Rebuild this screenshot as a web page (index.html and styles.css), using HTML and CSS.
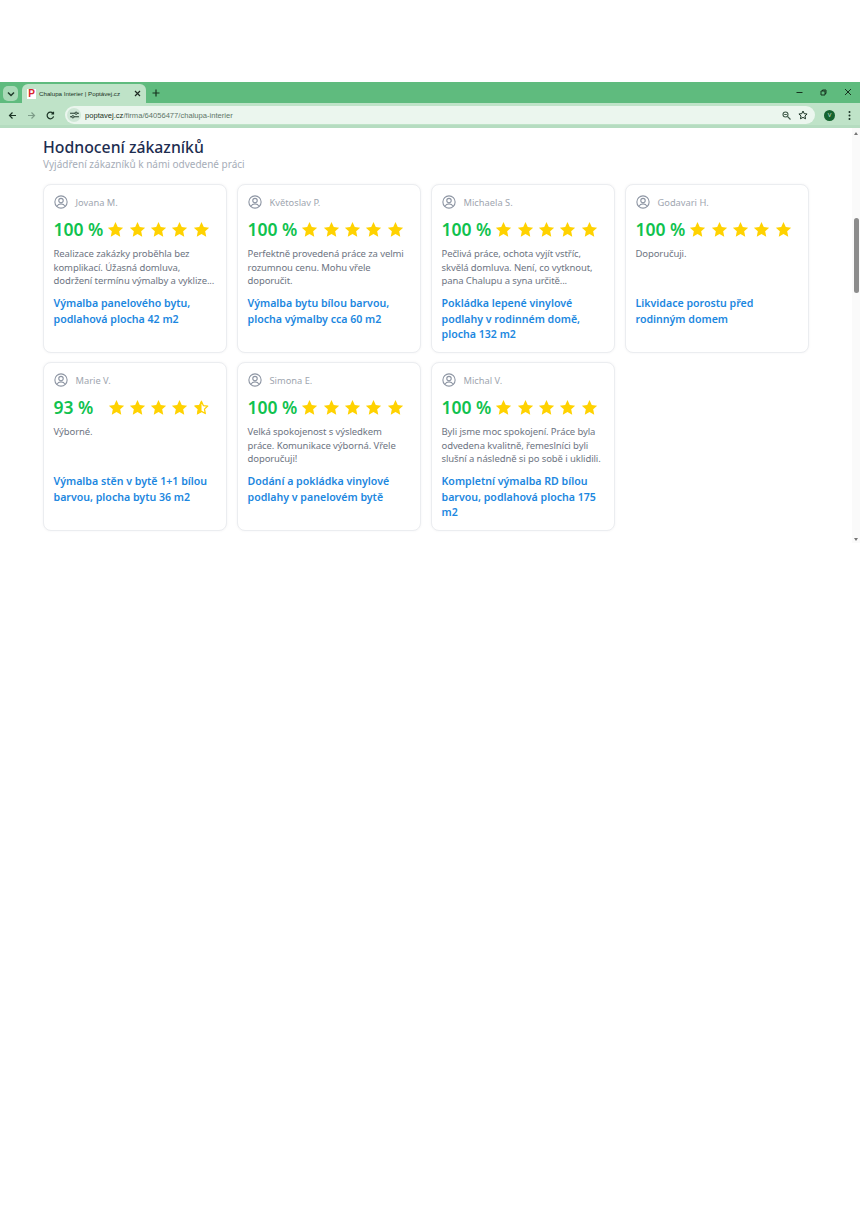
FILE: index.html
```html
<!DOCTYPE html>
<html lang="cs">
<head>
  <meta charset="UTF-8">
  <meta name="viewport" content="width=device-width, initial-scale=1.0">
  <title>Chalupa Interier | Poptávej.cz</title>
  <link rel="stylesheet" href="styles.css">
</head>
<body>
  <svg class="defs" width="0" height="0">
    <defs>
      <symbol id="star" viewBox="0 0 24 24">
        <path fill="#ffd200" d="M12 1.500l3.200 7 7.600.9-5.600 5.200 1.500 7.600L12 18.400l-6.700 3.800 1.500-7.600L1.200 9.400l7.600-.9z"/>
      </symbol>
      <symbol id="star-half" viewBox="0 0 24 24">
        <path fill="none" stroke="#ffd200" stroke-width="1.800" stroke-linejoin="round" d="M12 3.500l2.600 5.800 6.200.7-4.600 4.300 1.200 6.200-5.400-3.100-5.400 3.100 1.200-6.200L3.200 10l6.200-.7z"/>
        <path fill="#ffd200" d="M12 1.500v16.900l-6.700 3.800 1.500-7.600L1.200 9.400l7.600-.9z"/>
      </symbol>
      <symbol id="user" viewBox="0 0 24 24">
        <g fill="none" stroke="#8d95a3" stroke-width="1.900">
          <circle cx="12" cy="12" r="10.500"/>
          <circle cx="12" cy="9.500" r="3.800"/>
          <path d="M5 19.500c1.500-3 4-4.200 7-4.200s5.500 1.200 7 4.200"/>
        </g>
      </symbol>
    </defs>
  </svg>

  <div class="browser">
    <div class="tabstrip">
      <div class="tab-menu">
        <svg width="8" height="6" viewBox="0 0 8 6"><path d="M1 1.500l3 3 3-3" fill="none" stroke="#1f3a2a" stroke-width="1.500"/></svg>
      </div>
      <div class="tab">
        <span class="favicon">P</span>
        <span class="tab-title">Chalupa Interier | Poptávej.cz</span>
        <svg class="tab-close" width="7" height="7" viewBox="0 0 7 7"><path d="M1 1l5 5M6 1L1 6" stroke="#1f2a24" stroke-width="1.200"/></svg>
      </div>
      <svg class="tab-new" width="8" height="8" viewBox="0 0 8 8"><path d="M4 .5v7M.5 4h7" stroke="#17321f" stroke-width="1.200"/></svg>
      <div class="win-controls">
        <svg width="7" height="7" viewBox="0 0 7 7"><path d="M.5 3.500h6" stroke="#17321f" stroke-width="1"/></svg>
        <svg width="7" height="7" viewBox="0 0 7 7"><path d="M1 2h4v4H1zM2.500 2V1H6v3.500H5" fill="none" stroke="#17321f" stroke-width="1"/></svg>
        <svg width="8" height="8" viewBox="0 0 8 8"><path d="M1 1l6 6M7 1L1 7" stroke="#17321f" stroke-width="1"/></svg>
      </div>
    </div>
    <div class="toolbar">
      <svg class="nav-icon" width="9" height="9" viewBox="0 0 9 9"><path d="M8 4.500H1.500M4.500 1.500l-3 3 3 3" fill="none" stroke="#1b3325" stroke-width="1.200"/></svg>
      <svg class="nav-icon" width="9" height="9" viewBox="0 0 9 9"><path d="M1 4.500h6.500M4.500 1.500l3 3-3 3" fill="none" stroke="#7d9c88" stroke-width="1.200"/></svg>
      <svg class="nav-icon" width="9" height="9" viewBox="0 0 9 9"><path d="M7.600 5.400A3.300 3.300 0 1 1 7 2.400M7.500 .8v2.200H5.300" fill="none" stroke="#1b3325" stroke-width="1.200"/></svg>
      <div class="omnibox">
        <span class="site-info">
          <svg width="9" height="8" viewBox="0 0 10 9"><path d="M0 2.500h5.500M8 2.500h2M0 6.500h2M4.500 6.500H10" stroke="#1b3325" stroke-width="1.100"/><circle cx="6.800" cy="2.500" r="1.300" fill="none" stroke="#1b3325"/><circle cx="3.200" cy="6.500" r="1.300" fill="none" stroke="#1b3325"/></svg>
        </span>
        <span class="url"><b>poptavej.cz</b>/firma/64056477/chalupa-interier</span>
        <svg class="omni-icon" width="9" height="9" viewBox="0 0 9 9"><circle cx="3.500" cy="3.500" r="2.500" fill="none" stroke="#3f5a49" stroke-width="1.100"/><path d="M5.500 5.500l3 3M2.200 3.500h2.600" stroke="#3f5a49" stroke-width="1.100"/></svg>
        <svg class="omni-icon" width="10" height="10" viewBox="0 0 24 24"><path d="M12 2.500l2.900 6.300 6.900.8-5.100 4.700 1.400 6.800-6.100-3.400-6.100 3.400 1.400-6.800-5.100-4.700 6.900-.8z" fill="none" stroke="#1b3325" stroke-width="2.400"/></svg>
      </div>
      <span class="avatar">V</span>
      <svg class="kebab" width="3" height="9" viewBox="0 0 3 9"><circle cx="1.500" cy="1" r="1" fill="#1b3325"/><circle cx="1.500" cy="4.500" r="1" fill="#1b3325"/><circle cx="1.500" cy="8" r="1" fill="#1b3325"/></svg>
    </div>

    <div class="viewport">
      <main class="content">
        <h2>Hodnocení zákazníků</h2>
        <p class="subtitle">Vyjádření zákazníků k námi odvedené práci</p>
        <div class="reviews">

          <div class="card">
            <div class="author"><svg class="user-icon"><use href="#user"/></svg>Jovana M.</div>
            <div class="rating"><span class="score">100 %</span><span class="stars"><svg><use href="#star"/></svg><svg><use href="#star"/></svg><svg><use href="#star"/></svg><svg><use href="#star"/></svg><svg><use href="#star"/></svg></span></div>
            <p class="text">Realizace zakázky proběhla bez komplikací. Úžasná domluva, dodržení termínu výmalby a vyklize...</p>
            <a class="job" href="#">Výmalba panelového bytu, podlahová plocha 42 m2</a>
          </div>

          <div class="card">
            <div class="author"><svg class="user-icon"><use href="#user"/></svg>Květoslav P.</div>
            <div class="rating"><span class="score">100 %</span><span class="stars"><svg><use href="#star"/></svg><svg><use href="#star"/></svg><svg><use href="#star"/></svg><svg><use href="#star"/></svg><svg><use href="#star"/></svg></span></div>
            <p class="text">Perfektně provedená práce za velmi rozumnou cenu. Mohu vřele doporučit.</p>
            <a class="job" href="#">Výmalba bytu bílou barvou, plocha výmalby cca 60 m2</a>
          </div>

          <div class="card">
            <div class="author"><svg class="user-icon"><use href="#user"/></svg>Michaela S.</div>
            <div class="rating"><span class="score">100 %</span><span class="stars"><svg><use href="#star"/></svg><svg><use href="#star"/></svg><svg><use href="#star"/></svg><svg><use href="#star"/></svg><svg><use href="#star"/></svg></span></div>
            <p class="text">Pečlivá práce, ochota vyjít vstříc, skvělá domluva. Není, co vytknout, pana Chalupu a syna určitě...</p>
            <a class="job" href="#">Pokládka lepené vinylové podlahy v rodinném domě, plocha 132 m2</a>
          </div>

          <div class="card">
            <div class="author"><svg class="user-icon"><use href="#user"/></svg>Godavari H.</div>
            <div class="rating"><span class="score">100 %</span><span class="stars"><svg><use href="#star"/></svg><svg><use href="#star"/></svg><svg><use href="#star"/></svg><svg><use href="#star"/></svg><svg><use href="#star"/></svg></span></div>
            <p class="text">Doporučuji.</p>
            <a class="job" href="#">Likvidace porostu před rodinným domem</a>
          </div>

          <div class="card">
            <div class="author"><svg class="user-icon"><use href="#user"/></svg>Marie V.</div>
            <div class="rating"><span class="score wide">93 %</span><span class="stars"><svg><use href="#star"/></svg><svg><use href="#star"/></svg><svg><use href="#star"/></svg><svg><use href="#star"/></svg><svg><use href="#star-half"/></svg></span></div>
            <p class="text">Výborné.</p>
            <a class="job" href="#">Výmalba stěn v bytě 1+1 bílou barvou, plocha bytu 36 m2</a>
          </div>

          <div class="card">
            <div class="author"><svg class="user-icon"><use href="#user"/></svg>Simona E.</div>
            <div class="rating"><span class="score">100 %</span><span class="stars"><svg><use href="#star"/></svg><svg><use href="#star"/></svg><svg><use href="#star"/></svg><svg><use href="#star"/></svg><svg><use href="#star"/></svg></span></div>
            <p class="text">Velká spokojenost s výsledkem práce. Komunikace výborná. Vřele doporučuji!</p>
            <a class="job" href="#">Dodání a pokládka vinylové podlahy v panelovém bytě</a>
          </div>

          <div class="card">
            <div class="author"><svg class="user-icon"><use href="#user"/></svg>Michal V.</div>
            <div class="rating"><span class="score">100 %</span><span class="stars"><svg><use href="#star"/></svg><svg><use href="#star"/></svg><svg><use href="#star"/></svg><svg><use href="#star"/></svg><svg><use href="#star"/></svg></span></div>
            <p class="text">Byli jsme moc spokojení. Práce byla odvedena kvalitně, řemeslníci byli slušní a následně si po sobě i uklidili.</p>
            <a class="job" href="#">Kompletní výmalba RD bílou barvou, podlahová plocha 175 m2</a>
          </div>

        </div>
      </main>
      <div class="scrollbar">
        <span class="arrow-up"></span>
        <span class="thumb"></span>
        <span class="arrow-down"></span>
      </div>
    </div>
  </div>
</body>
</html>
```

FILE: styles.css
```css
body {
  margin: 0;
  padding-top: 82px;
  background: #fff;
  font-family: "Noto Sans", "Open Sans", sans-serif;
  overflow: hidden;
}
.defs {
  position: absolute;
}

/* Horni lista prohlizece */
.tabstrip {
  height: 21px;
  background: #5fbb7e;
  display: flex;
  align-items: flex-end;
  color: #1b3325;
}
.tab-menu {
  width: 15px;
  height: 15px;
  margin: 0 4px 2px 3px;
  background: #a9d9b7;
  border-radius: 5px;
  display: flex;
  align-items: center;
  justify-content: center;
}
.tab {
  width: 124px;
  height: 19px;
  padding: 0 5px;
  box-sizing: border-box;
  background: #bfe3c8;
  border-radius: 6px 6px 0 0;
  display: flex;
  align-items: center;
  font-size: 6.200px;
  font-family: "Liberation Sans", sans-serif;
}
.favicon {
  width: 9px;
  height: 10px;
  margin-right: 3px;
  background: #fff;
  color: #d9232e;
  font-size: 10px;
  font-weight: 700;
  line-height: 10px;
  text-align: center;
}
.tab-title {
  flex: 1;
  white-space: nowrap;
}
.tab-new {
  margin: 0 0 6px 6px;
}
.win-controls {
  margin-left: auto;
  padding-right: 8px;
  margin-bottom: 7px;
  display: flex;
  gap: 17px;
  align-items: center;
}

/* Adresni radek */
.toolbar {
  height: 25px;
  background: #bfe3c8;
  display: flex;
  align-items: center;
  padding-top: 2px;
  box-sizing: border-box;
  border-bottom: 3px solid #b5dcc0;
}
.nav-icon {
  margin-left: 8px;
  margin-right: 2px;
}
.omnibox {
  width: 750px;
  height: 18px;
  margin-left: 8px;
  background: #ebf6ee;
  border-radius: 9px;
  display: flex;
  align-items: center;
  font-size: 7.600px;
  font-family: "Liberation Sans", sans-serif;
  color: #5d7567;
}
.omnibox b {
  font-weight: 400;
  color: #1b3325;
}
.site-info {
  width: 14px;
  height: 14px;
  margin: 0 4px 0 2px;
  background: #cfe7d6;
  border-radius: 50%;
  display: flex;
  align-items: center;
  justify-content: center;
}
.url {
  flex: 1;
}
.omni-icon {
  margin-right: 7px;
}
.avatar {
  width: 11px;
  height: 11px;
  margin-left: 9px;
  background: #14632f;
  border-radius: 50%;
  color: #cfe7d6;
  font-size: 6px;
  line-height: 11px;
  text-align: center;
}
.kebab {
  margin-left: 13px;
}

/* Obsah stranky */
.viewport {
  height: 415px;
  position: relative;
}
.content {
  padding: 9px 0 0 43px;
}
h2 {
  margin: 0;
  font-size: 15.800px;
  line-height: 20px;
  font-weight: 500;
  color: #1d2d50;
}
.subtitle {
  margin: 0;
  font-size: 10px;
  line-height: 14px;
  color: #a6adb8;
}
.reviews {
  margin-top: 13px;
  display: grid;
  grid-template-columns: repeat(4, 184px);
  grid-auto-rows: 169px;
  gap: 9px 10px;
}
.card {
  padding: 9px 10px 0 9.500px;
  box-sizing: border-box;
  background: #fff;
  border: 1px solid #ebedf0;
  border-radius: 8px;
  box-shadow: 0 0 3px rgba(30, 40, 60, 0.05);
  display: flex;
  flex-direction: column;
}
.author {
  height: 16px;
  display: flex;
  align-items: center;
  font-size: 9.300px;
  color: #a0a6b0;
}
.user-icon {
  width: 14px;
  height: 14px;
  margin-right: 8px;
}
.rating {
  margin-top: 8px;
  height: 22px;
  display: flex;
  align-items: center;
}
.score {
  font-size: 17.500px;
  font-weight: 600;
  color: #10c24f;
  white-space: nowrap;
}
.score.wide {
  width: 50px;
}
.stars {
  margin-left: 4px;
  display: flex;
  gap: 4.300px;
}
.stars svg {
  width: 17px;
  height: 17px;
}
.text {
  margin: 7px 0 0;
  height: 39px;
  font-size: 9.500px;
  line-height: 13.500px;
  color: #6d7482;
  letter-spacing: -0.1px;
}
.job {
  margin-top: 10px;
  font-size: 10.600px;
  line-height: 15.500px;
  font-weight: 600;
  color: #1c87e0;
  text-decoration: none;
}

/* Posuvnik */
.scrollbar {
  position: absolute;
  top: 0;
  right: 0;
  bottom: 0;
  width: 8px;
  background: #fafafa;
}
.thumb {
  position: absolute;
  top: 90px;
  left: 2px;
  width: 5px;
  height: 75px;
  background: #8c8c8c;
  border-radius: 3px;
}
.arrow-up, .arrow-down {
  position: absolute;
  left: 2px;
  border-left: 2.500px solid transparent;
  border-right: 2.500px solid transparent;
}
.arrow-up {
  top: 4px;
  border-bottom: 3px solid #777;
}
.arrow-down {
  bottom: 2px;
  border-top: 3px solid #777;
}
```
